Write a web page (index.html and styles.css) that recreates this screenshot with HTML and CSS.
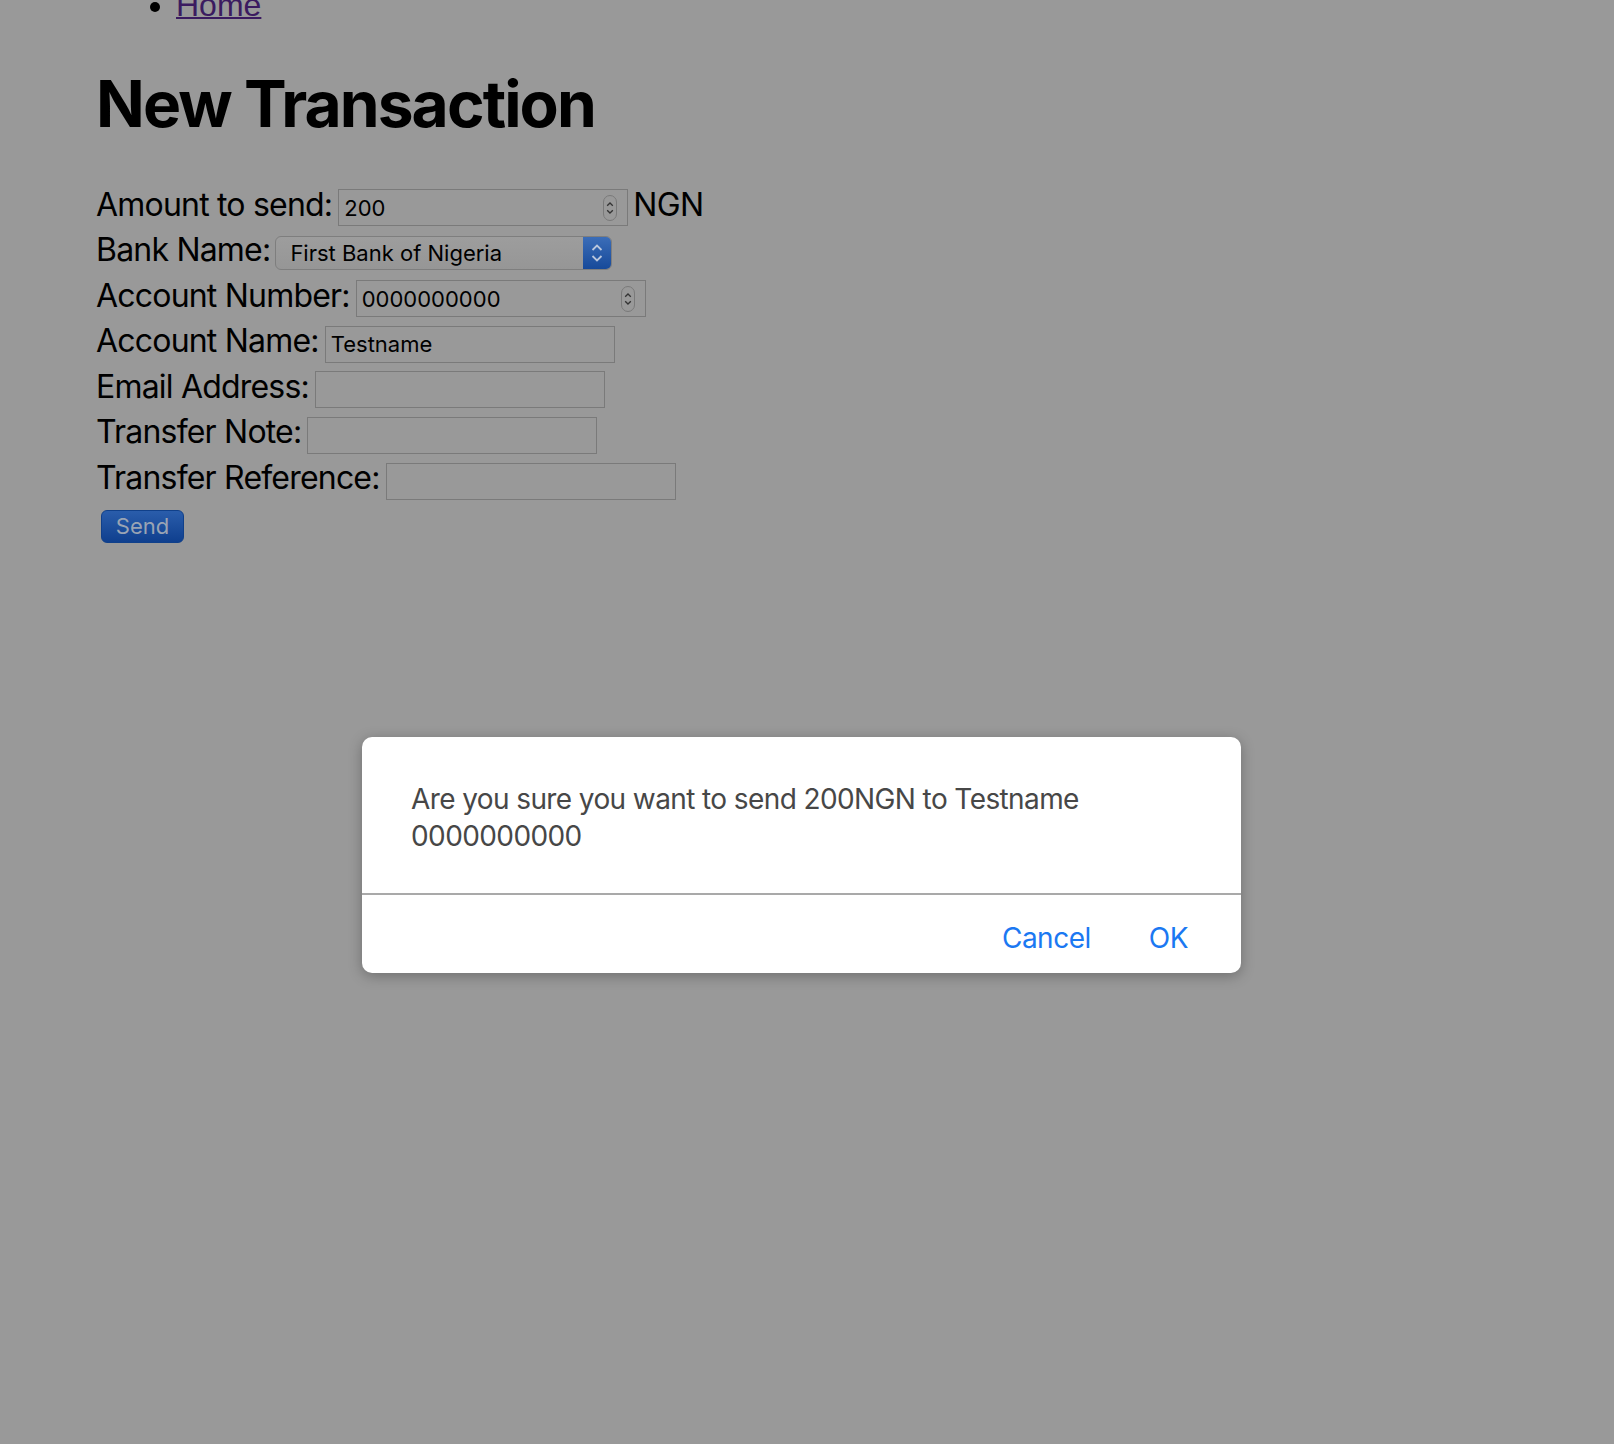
FILE: index.html
```html
<!DOCTYPE html>
<html lang="en">
<head>
<meta charset="utf-8">
<title>New Transaction</title>
<link rel="stylesheet" href="styles.css">
</head>
<body>
<div class="page">
  <ul class="nav">
    <li><a href="#" class="nav-link">Home</a></li>
  </ul>
  <h1 class="title">New Transaction</h1>
  <form class="form">
    <div class="row">
      <label class="label">Amount to send:</label>
      <span class="field">
        <input class="input" type="text" value="200">
        <span class="spin"><svg width="14" height="26" viewBox="0 0 14 26"><rect x="0.5" y="0.5" width="13" height="25" rx="6.5" fill="none" stroke="#7a7a7a"/><path d="M4.2 10.8 L7 8 L9.8 10.8" fill="none" stroke="#333" stroke-width="1.3"/><path d="M4.2 15.2 L7 18 L9.8 15.2" fill="none" stroke="#333" stroke-width="1.3"/></svg></span>
      </span>
      <span class="unit">NGN</span>
    </div>
    <div class="row">
      <label class="label">Bank Name:</label>
      <span class="select">
        <select class="select-input"><option>First Bank of Nigeria</option></select>
        <span class="select-arrow"><svg width="14" height="24" viewBox="0 0 14 24"><path d="M2.5 9 L7 4.5 L11.5 9" fill="none" stroke="#b9c6dc" stroke-width="1.8"/><path d="M2.5 15 L7 19.5 L11.5 15" fill="none" stroke="#b9c6dc" stroke-width="1.8"/></svg></span>
      </span>
    </div>
    <div class="row">
      <label class="label">Account Number:</label>
      <span class="field">
        <input class="input" type="text" value="0000000000">
        <span class="spin"><svg width="14" height="26" viewBox="0 0 14 26"><rect x="0.5" y="0.5" width="13" height="25" rx="6.5" fill="none" stroke="#7a7a7a"/><path d="M4.2 10.8 L7 8 L9.8 10.8" fill="none" stroke="#333" stroke-width="1.3"/><path d="M4.2 15.2 L7 18 L9.8 15.2" fill="none" stroke="#333" stroke-width="1.3"/></svg></span>
      </span>
    </div>
    <div class="row">
      <label class="label">Account Name:</label>
      <span class="field"><input class="input" type="text" value="Testname"></span>
    </div>
    <div class="row">
      <label class="label">Email Address:</label>
      <span class="field"><input class="input" type="text" value=""></span>
    </div>
    <div class="row">
      <label class="label">Transfer Note:</label>
      <span class="field"><input class="input" type="text" value=""></span>
    </div>
    <div class="row">
      <label class="label">Transfer Reference:</label>
      <span class="field"><input class="input" type="text" value=""></span>
    </div>
    <button type="button" class="send">Send</button>
  </form>
</div>

<div class="dialog">
  <div class="dialog-body">Are you sure you want to send 200NGN to Testname 0000000000</div>
  <div class="dialog-actions">
    <button type="button" class="dialog-btn">Cancel</button>
    <button type="button" class="dialog-btn">OK</button>
  </div>
</div>
</body>
</html>
```

FILE: styles.css
```css
html, body {
  margin: 0;
  padding: 0;
}
body {
  background: #999999;
  font-family: Inter, "Noto Sans", sans-serif;
  color: #000;
  min-height: 1444px;
  position: relative;
  overflow: hidden;
}
.page {
  padding-left: 96px;
  margin-top: -13px;
}
.nav {
  margin: 0;
  padding-left: 80px;
  font-family: "Liberation Sans", Arial, sans-serif;
  font-size: 32px;
  line-height: 37px;
}
.nav-link {
  color: #3b1b60;
  text-decoration: underline;
  text-decoration-thickness: 2px;
}
.title {
  font-size: 64px;
  font-weight: 700;
  line-height: 78px;
  margin: 41px 0 42.5px;
  letter-spacing: -1.9px;
}
.form {
  display: flex;
  flex-direction: column;
  align-items: flex-start;
}
.row {
  display: flex;
  align-items: baseline;
  height: 45.6px;
  gap: 6px;
}
.label {
  font-size: 32px;
  line-height: 38px;
  letter-spacing: -0.8px;
}
.field {
  display: inline-flex;
  align-items: center;
  width: 290px;
  height: 37px;
  box-sizing: border-box;
  border: 1px solid #7a7a7a;
  background: #999999;
}
.input {
  flex: 1;
  min-width: 0;
  height: 35px;
  border: 0;
  padding: 0 0 0 5px;
  margin: 0;
  background: transparent;
  font-family: Inter, "Noto Sans", sans-serif;
  font-size: 22px;
  color: #000;
  outline: none;
}
.spin {
  display: flex;
  margin-right: 10px;
}
.unit {
  font-size: 32px;
  line-height: 38px;
  letter-spacing: -0.65px;
  margin-left: -1px;
}
.select {
  display: inline-flex;
  align-items: stretch;
  width: 337px;
  height: 34px;
  box-sizing: border-box;
  border: 1px solid #7e7e7e;
  border-radius: 6px;
  background: linear-gradient(#9d9d9d, #969696);
  overflow: hidden;
  margin-left: -1px;
}
.select-input {
  flex: 1;
  appearance: none;
  -webkit-appearance: none;
  border: 0;
  background: transparent;
  font-family: Inter, "Noto Sans", sans-serif;
  font-size: 22px;
  color: #000;
  padding: 0 0 0 14px;
  margin: 0;
  outline: none;
}
.select-arrow {
  width: 28px;
  display: flex;
  align-items: center;
  justify-content: center;
  background: linear-gradient(#3b6db8, #174a9a);
}
.send {
  margin: 5px 0 0 5px;
  width: 83px;
  height: 33px;
  border: 1px solid #10408a;
  border-radius: 6px;
  background: linear-gradient(#2a5dab, #0f3f8e);
  color: #9aa4b4;
  font-family: Inter, "Noto Sans", sans-serif;
  font-size: 22px;
  padding: 0;
}
.dialog {
  position: absolute;
  left: 362px;
  top: 737px;
  width: 879px;
  height: 236px;
  box-sizing: border-box;
  background: #fff;
  border-radius: 10px;
  box-shadow: 0 3px 14px rgba(0, 0, 0, 0.28);
  display: flex;
  flex-direction: column;
}
.dialog-body {
  padding: 44px 49px 0;
  height: 158px;
  box-sizing: border-box;
  font-size: 28px;
  line-height: 37px;
  letter-spacing: -0.6px;
  color: #474747;
  border-bottom: 2px solid #a9a9a9;
}
.dialog-actions {
  display: flex;
  justify-content: flex-end;
  gap: 58px;
  padding: 25px 53px 0;
}
.dialog-btn {
  border: 0;
  background: none;
  padding: 0;
  font-family: Inter, "Noto Sans", sans-serif;
  font-size: 28px;
  line-height: 37px;
  letter-spacing: -0.5px;
  color: #1b78f2;
}
```
